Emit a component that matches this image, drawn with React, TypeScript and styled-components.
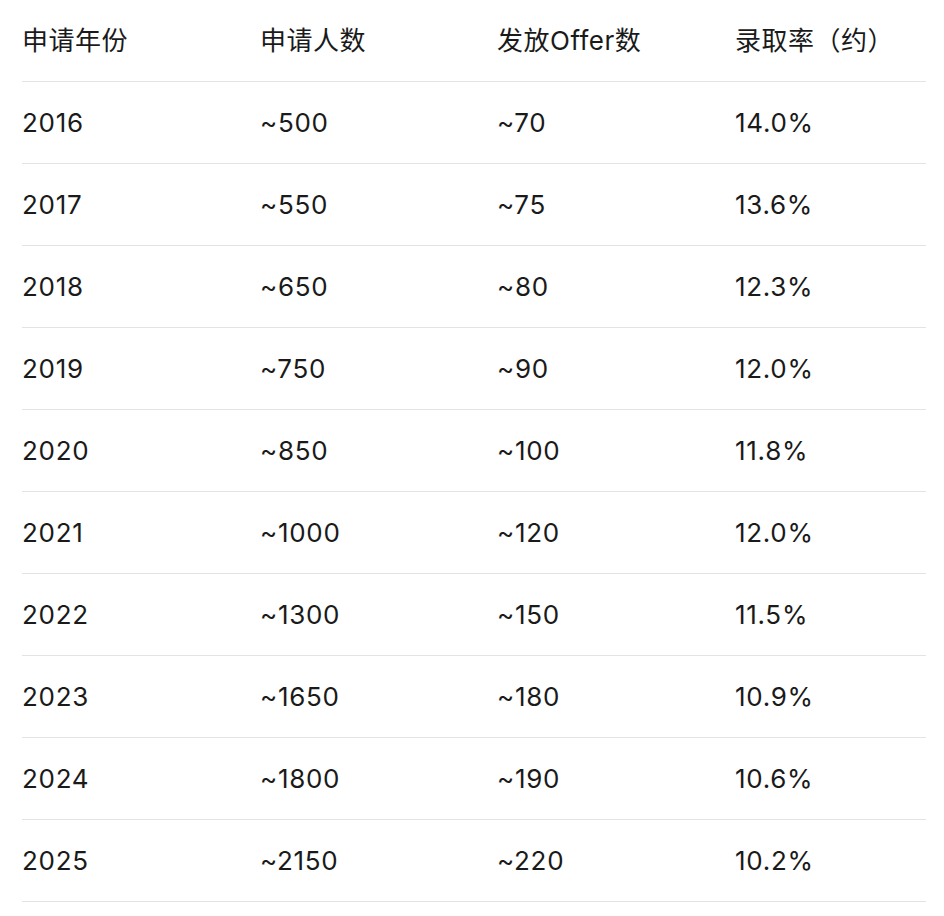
import React from "react";
import styled, { createGlobalStyle } from "styled-components";

const Global = createGlobalStyle`
  html, body { margin: 0; padding: 0; background: #ffffff; }
  body { font-family: Inter, "Noto Sans CJK SC", sans-serif; color: #1a1a1a; }
`;

const Table = styled.div`
  margin: 0 18px 0 22px;
  display: flex;
  flex-direction: column;
`;

const Row = styled.div`
  display: grid;
  grid-template-columns: 238px 237px 238px 1fr;
  height: 81px;
  align-items: center;
  border-bottom: 1px solid #e3e3e3;
`;

const Cell = styled.div<{ $head?: boolean }>`
  font-size: 26px;
  font-weight: 400;
  line-height: 1;
  letter-spacing: ${(p) => (p.$head ? "0.5px" : "0.7px")};
  white-space: nowrap;
`;

const header = ["申请年份", "申请人数", "发放Offer数", "录取率（约）"];
const rows = [
  ["2016", "~500", "~70", "14.0%"],
  ["2017", "~550", "~75", "13.6%"],
  ["2018", "~650", "~80", "12.3%"],
  ["2019", "~750", "~90", "12.0%"],
  ["2020", "~850", "~100", "11.8%"],
  ["2021", "~1000", "~120", "12.0%"],
  ["2022", "~1300", "~150", "11.5%"],
  ["2023", "~1650", "~180", "10.9%"],
  ["2024", "~1800", "~190", "10.6%"],
  ["2025", "~2150", "~220", "10.2%"],
];

export default function App() {
  return (
    <>
      <Global />
      <Table>
        <Row>
          {header.map((h) => (
            <Cell key={h} $head>{h}</Cell>
          ))}
        </Row>
        {rows.map((r) => (
          <Row key={r[0]}>
            {r.map((c, i) => (
              <Cell key={i}>{c}</Cell>
            ))}
          </Row>
        ))}
      </Table>
    </>
  );
}
